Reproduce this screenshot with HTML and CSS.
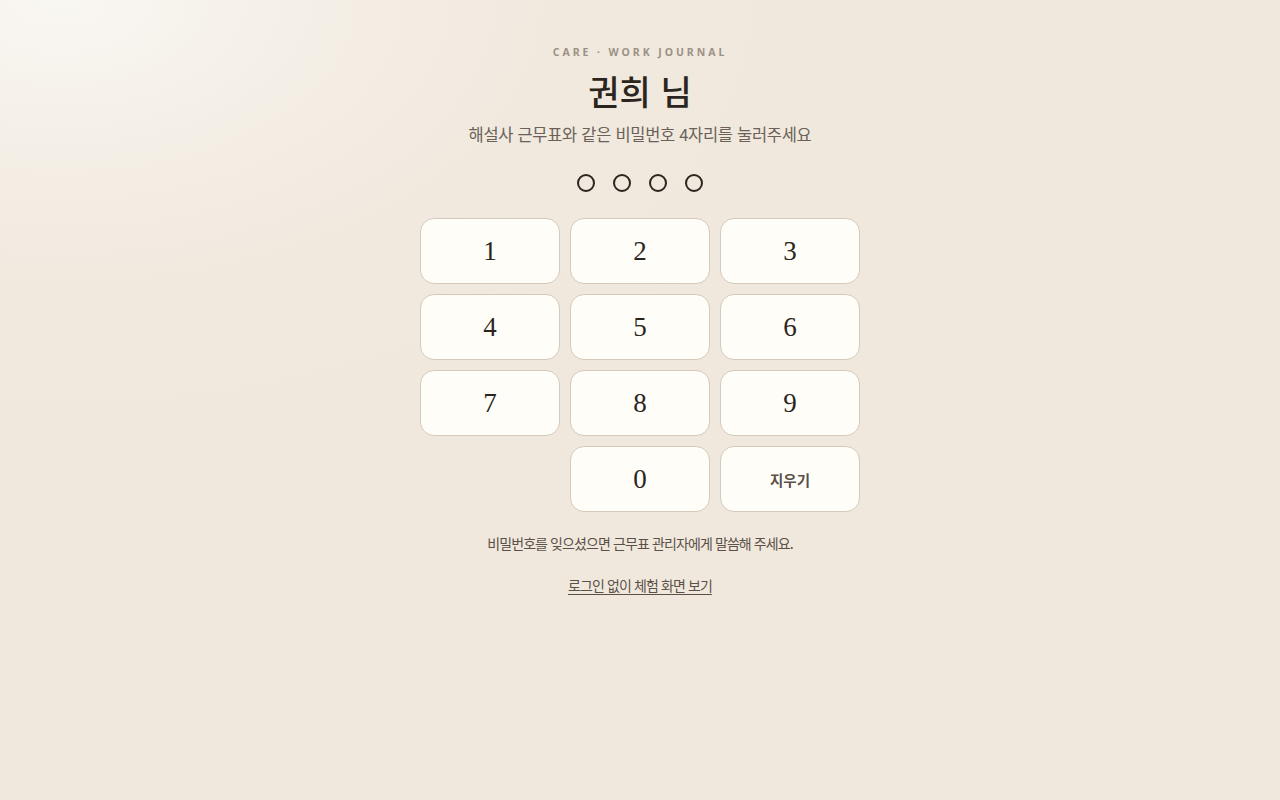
FILE: index.html
```html
<!DOCTYPE html>
<html lang="ko">
<head>
<meta charset="utf-8">
<title>Care · Work Journal</title>
<link rel="stylesheet" href="styles.css">
</head>
<body>
<main class="login">
  <p class="eyebrow">CARE · WORK JOURNAL</p>
  <h1 class="name">권희 님</h1>
  <p class="hint">해설사 근무표와 같은 비밀번호 4자리를 눌러주세요</p>
  <div class="dots">
    <span class="dot"></span><span class="dot"></span><span class="dot"></span><span class="dot"></span>
  </div>
  <div class="pad">
    <button class="key">1</button>
    <button class="key">2</button>
    <button class="key">3</button>
    <button class="key">4</button>
    <button class="key">5</button>
    <button class="key">6</button>
    <button class="key">7</button>
    <button class="key">8</button>
    <button class="key">9</button>
    <span class="blank"></span>
    <button class="key">0</button>
    <button class="key key-del">지우기</button>
  </div>
  <p class="note">비밀번호를 잊으셨으면 근무표 관리자에게 말씀해 주세요.</p>
  <a class="demo" href="#">로그인 없이 체험 화면 보기</a>
</main>
</body>
</html>
```
FILE: styles.css
```css
html, body { margin: 0; height: 100%; }
body {
  background:
    radial-gradient(ellipse 820px 480px at 60px 0px, rgba(250,248,244,0.95) 0%, rgba(247,243,237,0.6) 30%, rgba(243,237,228,0.25) 60%, rgba(240,232,221,0) 100%),
    #f0e8dd;
  font-family: "Noto Sans CJK KR", "Noto Sans", sans-serif;
  color: #2b2520;
}
.login {
  display: flex;
  flex-direction: column;
  align-items: center;
  padding-top: 45px;
}
.eyebrow {
  margin: 0;
  font-family: "Noto Sans", sans-serif;
  font-size: 10.5px;
  font-weight: 700;
  letter-spacing: 2.95px;
  color: #9b9185;
  line-height: 14px;
}
.name {
  margin: 10px 0 0;
  font-size: 34px;
  font-weight: 500;
  line-height: 44px;
  color: #2b2520;
  letter-spacing: 0;
}
.hint {
  margin: 9px 0 0;
  font-size: 16.5px;
  color: #6b6158;
  line-height: 24px;
  letter-spacing: -0.3px;
}
.dots {
  display: flex;
  gap: 18px;
  margin-top: 28px;
}
.dot {
  width: 14px;
  height: 14px;
  border: 2px solid #2b2520;
  border-radius: 50%;
}
.pad {
  display: grid;
  grid-template-columns: repeat(3, 140px);
  grid-auto-rows: 66px;
  gap: 10px;
  margin-top: 26px;
}
.key {
  background: #fffdf8;
  border: 1px solid #d4cabb;
  border-radius: 14px;
  font-family: "Liberation Serif", "DejaVu Serif", serif;
  font-size: 27px;
  color: #2b2520;
  padding: 0;
  cursor: pointer;
}
.key-del {
  font-family: "Noto Sans CJK KR", sans-serif;
  font-size: 14.5px;
  font-weight: 700;
  color: #5a5048;
}
.note {
  margin: 21px 0 0;
  font-size: 14px;
  color: #5a5048;
  letter-spacing: -0.9px;
  line-height: 20px;
}
.demo {
  margin-top: 22px;
  font-size: 14px;
  color: #5a5048;
  letter-spacing: -0.9px;
  line-height: 20px;
  text-decoration: underline;
  text-underline-offset: 3px;
}
```
